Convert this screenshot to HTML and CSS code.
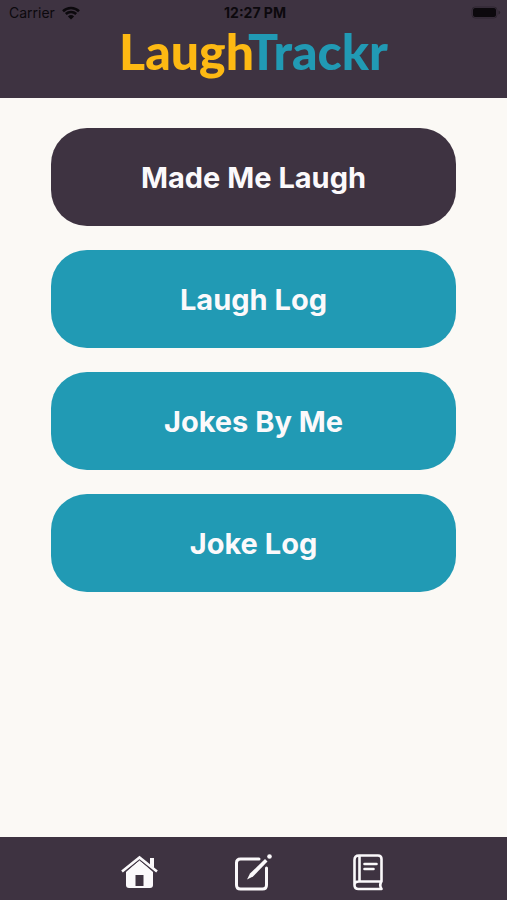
FILE: index.html
```
<!DOCTYPE html>
<html lang="en-US">
	<head>
		<meta charset="utf-8">
		<meta name="viewport" content="width=device-width, initial-scale=1">
		<title>LaughTrackr</title>
		<link rel="stylesheet" href="styles.css">
	</head>
	<body>
		<header class="header">
			<div class="status">
				<div class="carrier">
					<span>Carrier</span>
					<svg class="wifi" viewBox="0 0 18 14" aria-hidden="true">
						<path d="M1 5.2a11.5 11.5 0 0 1 16 0M3.8 8a7.6 7.6 0 0 1 10.4 0" fill="none" stroke="currentColor" stroke-width="2.6"/>
						<path d="M9 13.6L5.9 10.4a4.5 4.5 0 0 1 6.2 0z" fill="currentColor"/>
					</svg>
				</div>
				<span class="time">12:27 PM</span>
				<svg class="battery" viewBox="0 0 30 14" aria-hidden="true">
					<rect x="1" y="1" width="25" height="11" rx="3" fill="none" stroke="currentColor" opacity=".3"/>
					<rect x="2" y="2" width="23" height="9" rx="2" fill="currentColor"/>
					<path d="M27.5 4.5v4q1.7-.7 1.7-2t-1.7-2z" fill="currentColor" opacity=".4"/>
				</svg>
			</div>
			<h1 class="logo">Laugh<span class="logo-end">Trackr</span></h1>
		</header>
		<main class="menu">
			<button type="button" class="menu-button active">Made Me Laugh</button>
			<button type="button" class="menu-button">Laugh Log</button>
			<button type="button" class="menu-button">Jokes By Me</button>
			<button type="button" class="menu-button">Joke Log</button>
		</main>
		<nav class="tabs">
			<a class="tab" href="#home" aria-label="Home">
				<svg class="icon" viewBox="0 0 40 40">
					<path d="M7 21v13q0 3 3 3h21q3 0 3-3V21L20.5 9z" fill="currentColor"/>
					<path d="M31 7h4v10l-4-3z" fill="currentColor"/>
					<path d="M4 22L20.5 9L37 22" fill="none" stroke="#3e3341"/>
					<path d="M3 20.5L20.5 6.5L38 20.5" fill="none" stroke="currentColor" stroke-width="2.6"/>
					<rect class="door" x="16.5" y="24" width="8" height="11"/>
				</svg>
			</a>
			<a class="tab" href="#write" aria-label="Write">
				<svg class="icon" viewBox="0 0 40 40" fill="none" stroke="currentColor" stroke-width="3">
					<path d="M26 8H7.5q-4 0-4 4v22q0 4 4 4h22q4 0 4-4V17" stroke-linecap="round"/>
					<path d="M14 28.5l3-6L32 8l2.5 2.5L20 25.5z" fill="currentColor" stroke="none"/>
					<circle cx="36.5" cy="5.5" r="2.3" fill="currentColor" stroke="none"/>
				</svg>
			</a>
			<a class="tab" href="#log" aria-label="Log">
				<svg class="icon" viewBox="0 0 40 40" fill="none" stroke="currentColor" stroke-width="2.6" stroke-linejoin="round" stroke-linecap="round">
					<path d="M33.5 30.5V8q0-3.5-3.5-3.5H11Q6.5 4.5 6.5 9v25q0 4 4 4h23q-2.5-4 0-7.5H11q-4.5 0-4.5 3.5M11.5 5v25"/>
					<path d="M16.5 13h12M16.5 18h9"/>
				</svg>
			</a>
		</nav>
	</body>
</html>
```
FILE: styles.css
```
* {
	box-sizing:border-box;
}
body {
	margin:0;
	min-height:100vh;
	display:flex;
	flex-direction:column;
	background:#fbf9f5;
	font-family:Inter, "Liberation Sans", sans-serif;
}
.header {
	padding-bottom:22px;
	background:#3e3341;
}
.status {
	display:grid;
	grid-template-columns:1fr auto 1fr;
	align-items:center;
	height:26px;
	padding:0 6px 0 9px;
	font-size:14px;
	line-height:16px;
	color:#0c090d;
}
.carrier {
	display:flex;
	align-items:center;
	gap:7px;
}
.wifi {
	width:18px;
	height:14px;
}
.time {
	font-weight:700;
}
.battery {
	width:30px;
	height:14px;
	justify-self:end;
}
.logo {
	margin:0;
	font-family:Lato, sans-serif;
	font-size:50px;
	line-height:50px;
	font-weight:900;
	text-align:center;
	color:#fdb913;
}
.logo-end {
	color:#219ab4;
}
.menu {
	flex:1;
	display:flex;
	flex-direction:column;
	gap:24px;
	padding:30px 10%;
}
.menu-button {
	height:98px;
	border:0;
	border-radius:36px;
	background:#219ab4;
	color:#fbf9fb;
	font-family:inherit;
	font-size:29px;
	font-weight:700;
}
.active {
	background:#3e3341;
}
.tabs {
	display:flex;
	height:63px;
	padding:0 16%;
	background:#3e3341;
}
.tab {
	flex:1;
	display:flex;
	align-items:center;
	justify-content:center;
	padding-top:4px;
	color:#fbf9fb;
}
.icon {
	width:40px;
	height:40px;
}
.door {
	fill:#3e3341;
}
```
